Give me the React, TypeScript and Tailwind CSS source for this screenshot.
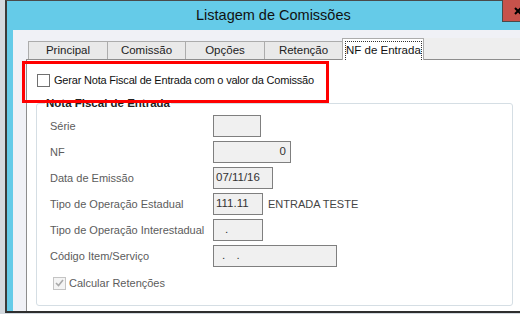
import React from "react";

const font = { fontFamily: '"Liberation Sans", Arial, sans-serif' };

const tabs = [
    { label: "Principal", w: "w-[79px]" },
    { label: "Comissão", w: "w-[78px]" },
    { label: "Opções", w: "w-[79px]" },
    { label: "Retenção", w: "w-[78px]" },
];

type Field = { label: string; value: string; w: string; align?: string; extra?: string };

const fields: Field[] = [
    { label: "Série", value: "", w: "w-[48px]" },
    { label: "NF", value: "0", w: "w-[78px]", align: "justify-end pr-[4px]" },
    { label: "Data de Emissão", value: "07/11/16", w: "w-[60px]", align: "pl-[2px]" },
    { label: "Tipo de Operação Estadual", value: "111.11", w: "w-[50px]", align: "pl-[2px]", extra: "ENTRADA TESTE" },
    { label: "Tipo de Operação Interestadual", value: ".", w: "w-[50px]", align: "pl-[11px]" },
    { label: "Código Item/Serviço", value: ". .", w: "w-[124px]", align: "pl-[8px] tracking-[4px]" },
];

function Checkbox({ disabled }: { disabled?: boolean }) {
    if (disabled) {
        return (
            <span className="flex h-[13px] w-[13px] shrink-0 items-center justify-center border border-[#c4c4c4] bg-[#f4f4f4]">
                <svg width="9" height="8" viewBox="0 0 9 8">
                    <path d="M1 4 L3.5 6.5 L8 1" fill="none" stroke="#a9a9a9" strokeWidth="1.6" />
                </svg>
            </span>
        );
    }
    return <span className="h-[13px] w-[13px] shrink-0 border border-[#707070] bg-white" />;
}

export default function App() {
    return (
        <div className="flex h-[314px] w-[520px] overflow-hidden whitespace-nowrap bg-[#d3d9df] text-[11px] text-[#222]" style={font}>
            <div className="ml-[5px] flex h-[313px] flex-1 flex-col border-b-2 border-l-2 border-t border-b-[#2e2e2e] border-l-[#3a3a3a] border-t-[#4a4a4a] bg-[#65cbe8]">
                {/* title bar */}
                <div className="relative flex h-[29px] shrink-0 items-center pl-[189px]">
                    <span className="text-[14.5px] text-[#111]">Listagem de Comissões</span>
                    <div className="absolute -top-px left-[495px] flex h-[22px] w-[18px] items-center overflow-hidden border-b border-l border-[#4a4a4a] bg-[#c7524b] pl-[11px]">
                        <svg width="8" height="8" viewBox="0 0 8 8" className="shrink-0">
                            <path d="M1 1 L7 7 M7 1 L1 7" stroke="#000" strokeWidth="2" />
                        </svg>
                    </div>
                </div>

                {/* body */}
                <div className="ml-[6px] flex flex-1 flex-col bg-[#f0f1f6] pt-[8px]">
                    <div className="ml-[13px] flex h-[21px] items-end pl-[2px]">
                        {tabs.map((t) => (
                            <div
                                key={t.label}
                                className={`${t.w} flex h-[18px] items-center justify-center border border-b-0 border-r-0 border-[#acacac] bg-[#e9e9e9] text-[11.5px] text-[#222]`}
                            >
                                {t.label}
                            </div>
                        ))}
                        <div className="relative z-10 mb-[-1px] flex h-[22px] w-[82px] border border-b-0 border-[#acacac] bg-white p-[2px] pb-0">
                            <div className="flex flex-1 items-center justify-center border border-b-0 border-dotted border-[#333] text-[11.5px] text-[#111]">
                                NF de Entrada
                            </div>
                        </div>
                        <div className="h-full flex-1 bg-[#eeeeee]" />
                    </div>

                    <div className="relative ml-[13px] flex flex-1 flex-col border-l border-t border-[#8d8d8d] bg-white pl-[10px]">
                        <div className="mt-[14px] flex h-[13px] items-center gap-[4px]">
                            <Checkbox />
                            <span className="tracking-[-0.2px] text-[#111]">Gerar Nota Fiscal de Entrada com o valor da Comissão</span>
                        </div>

                        <div className="relative mt-[16px] ml-[-1px] flex h-[203px] w-[477px] flex-col rounded-[3px] border border-[#d5dee4] pl-[13px] pt-[11px]">
                            <span className="absolute -top-[9px] left-[8px] bg-white px-px text-[11.5px] font-bold text-[#222]">
                                Nota Fiscal de Entrada
                            </span>
                            <div className="flex flex-col gap-[4px]">
                                {fields.map((f) => (
                                    <div key={f.label} className="flex h-[22px] items-center">
                                        <span className="w-[163px] text-[#5c5c5c]">{f.label}</span>
                                        <div
                                            className={`${f.w} ${f.align ?? ""} flex h-[22px] items-center border border-[#7f7f7f] bg-[#f0f0f0] text-[11.5px] text-[#333]`}
                                        >
                                            {f.value}
                                        </div>
                                        {f.extra && <span className="ml-[5px] text-[#444]">{f.extra}</span>}
                                    </div>
                                ))}
                            </div>
                            <div className="mt-[9px] ml-[3px] flex h-[14px] items-center gap-[3px]">
                                <Checkbox disabled />
                                <span className="text-[#5c5c5c]">Calcular Retenções</span>
                            </div>
                        </div>

                        <div className="pointer-events-none absolute -left-[5px] top-[1px] h-[42px] w-[307px] border-[3px] border-[#ff0000]" />
                    </div>
                </div>
            </div>
        </div>
    );
}
